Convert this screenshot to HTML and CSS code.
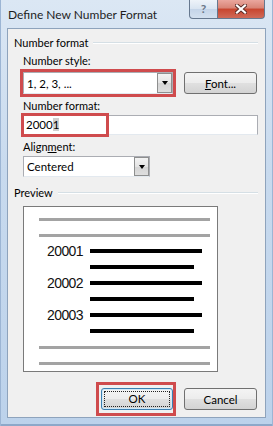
FILE: index.html
```html
<!DOCTYPE html>
<html lang="en">
<head>
    <meta charset="UTF-8">
    <meta name="viewport" content="width=device-width, initial-scale=1.0">
    <title>Define New Number Format</title>
    <link rel="stylesheet" href="styles.css">
</head>
<body>
    <div class="window">
        <!-- Title bar -->
        <div class="titlebar">
            <span class="title">Define New Number Format</span>
            <div class="caption">
                <div class="cap-help">?</div>
                <div class="cap-close">
                    <svg width="12" height="10" viewBox="0 0 12 10">
                        <path d="M2 1.5 L10 8.5 M10 1.5 L2 8.5" stroke="#5a2a26" stroke-width="4" stroke-linecap="square"/>
                        <path d="M2 1.5 L10 8.5 M10 1.5 L2 8.5" stroke="#fff" stroke-width="2.2" stroke-linecap="square"/>
                    </svg>
                </div>
            </div>
        </div>

        <div class="client">
            <!-- Number format group -->
            <div class="group-title"><span>Number format</span><div class="rule"></div></div>
            <div class="section">
                <label class="lbl">Number style:</label>
                <div class="row">
                    <div class="marked">
                        <div class="combo combo-style">
                            <span class="combo-text">1, 2, 3, ...</span>
                            <div class="drop"><span class="tri"></span></div>
                        </div>
                        <div class="mark mark-style"></div>
                    </div>
                    <button class="btn btn-font"><u>F</u>ont...</button>
                </div>

                <label class="lbl">Number format:</label>
                <div class="marked field-wrap">
                    <div class="textbox">2000<span class="sel">1</span></div>
                    <div class="mark mark-format"></div>
                </div>

                <label class="lbl">Align<u>m</u>ent:</label>
                <div class="combo combo-align">
                    <span class="combo-text">Centered</span>
                    <div class="drop"><span class="tri"></span></div>
                </div>
            </div>

            <!-- Preview group -->
            <div class="group-title preview-title"><span>Preview</span><div class="rule"></div></div>
            <div class="section">
                <div class="preview">
                    <div class="pv-row"><div class="grey-bar"></div></div>
                    <div class="pv-row"><div class="grey-bar"></div></div>
                    <div class="pv-row"><span class="num">20001</span><div class="bar long"></div></div>
                    <div class="pv-row"><span class="num"></span><div class="bar short"></div></div>
                    <div class="pv-row"><span class="num">20002</span><div class="bar long"></div></div>
                    <div class="pv-row"><span class="num"></span><div class="bar short"></div></div>
                    <div class="pv-row"><span class="num">20003</span><div class="bar long"></div></div>
                    <div class="pv-row"><span class="num"></span><div class="bar short"></div></div>
                    <div class="pv-row"><div class="grey-bar"></div></div>
                    <div class="pv-row"><div class="grey-bar"></div></div>
                </div>
            </div>

            <!-- Dialog buttons -->
            <div class="actions">
                <div class="marked">
                    <button class="btn btn-ok"><span class="focus">OK</span></button>
                    <div class="mark mark-ok"></div>
                </div>
                <button class="btn btn-cancel">Cancel</button>
            </div>
        </div>
    </div>
</body>
</html>
```

FILE: styles.css
```css
body {
    margin: 0;
    padding: 0;
    font-family: Lato, "Open Sans", sans-serif;
    font-size: 11px;
    color: #000;
    background-color: #c3d6ec;
}
.window {
    width: 273px;
    height: 426px;
    display: flex;
    flex-direction: column;
    background: linear-gradient(#dbe7f4, #c8daee 40%, #bcd2eb);
    box-shadow: inset 1px 0 0 #9cb5d4, inset -1px 0 0 #9cb5d4, inset 0 -2px 0 #8da8c9;
}
.titlebar {
    height: 28px;
    display: flex;
    align-items: flex-start;
    flex-shrink: 0;
}
.title {
    padding: 7px 0 0 8px;
    font-size: 12px;
    line-height: 15px;
    color: #1e1e1e;
}
.caption {
    margin-left: auto;
    margin-right: 8px;
    display: flex;
}
.cap-help {
    width: 27px;
    height: 18px;
    border: 1px solid #66788f;
    border-top: none;
    border-radius: 0 0 0 4px;
    background: linear-gradient(#eef3f9, #d9e4f1 50%, #c4d4e8 50%, #d3e0ef);
    color: #6b7788;
    font-size: 12px;
    font-weight: bold;
    line-height: 17px;
    text-align: center;
}
.cap-close {
    width: 46px;
    height: 18px;
    border: 1px solid #66788f;
    border-top: none;
    border-left: none;
    border-radius: 0 0 4px 0;
    background: linear-gradient(#eaa79e, #d88375 45%, #c8452f 50%, #d06a58);
    display: flex;
    align-items: center;
    justify-content: center;
}
.client {
    flex: 1;
    margin: 0 7px 8px 7px;
    padding: 7px 7px 0 6px;
    background-color: #f0f0f0;
    border: 1px solid #8ea3bc;
}
.group-title {
    display: flex;
    align-items: center;
    gap: 5px;
    line-height: 14px;
}
.group-title .rule {
    flex: 1;
    height: 0;
    border-top: 1px solid #d5dfe5;
    border-bottom: 1px solid #fff;
}
.preview-title {
    margin-top: 9px;
}
.section {
    padding-left: 9px;
}
.lbl {
    display: block;
    line-height: 14px;
    margin-top: 5px;
}
.lbl:first-child {
    margin-top: 4px;
}
.row {
    display: flex;
    align-items: center;
    gap: 11px;
    margin-top: 4px;
}
.marked {
    position: relative;
}
.mark {
    position: absolute;
    border: 3px solid #cf4b4d;
    pointer-events: none;
}
.mark-style {
    inset: -3px;
}
.mark-format {
    top: -2px;
    bottom: -2px;
    left: -2px;
    width: 82px;
}
.mark-ok {
    top: -6px;
    bottom: -6px;
    left: -5px;
    right: -3px;
}
.combo {
    display: flex;
    align-items: center;
    height: 21px;
    box-sizing: border-box;
    background: #fff;
    border: 1px solid #abadb3;
    border-bottom-color: #e3e9ef;
}
.combo-style {
    width: 150px;
    height: 22px;
}
.combo-align {
    width: 127px;
    margin-top: 2px;
}
.combo-text {
    flex: 1;
    padding-left: 3px;
    font-size: 11.5px;
}
.drop {
    width: 15px;
    height: 100%;
    box-sizing: border-box;
    border: 1px solid #8e8f8f;
    background: linear-gradient(#f3f3f3, #e4e4e4 50%, #d4d4d4 50%, #dedede);
    display: flex;
    align-items: center;
    justify-content: center;
}
.tri {
    width: 0;
    height: 0;
    border-left: 3.5px solid transparent;
    border-right: 3.5px solid transparent;
    border-top: 4px solid #000;
}
.field-wrap {
    margin-top: 2px;
    width: 235px;
}
.textbox {
    height: 20px;
    box-sizing: border-box;
    border: 1px solid #abadb3;
    border-bottom-color: #e3e9ef;
    background: #fff;
    padding-left: 2px;
    font-size: 11.5px;
    line-height: 18px;
}
.sel {
    background: #cfcfcf;
}
.btn {
    height: 21px;
    box-sizing: border-box;
    border: 1px solid #707070;
    border-radius: 3px;
    background: linear-gradient(#f4f4f4, #ececec 50%, #e0e0e0 50%, #d3d3d3);
    font-family: Lato, "Open Sans", sans-serif;
    font-size: 11.5px;
    color: #000;
    padding: 0;
}
.btn-font {
    width: 73px;
    height: 22px;
}
.preview {
    margin-top: 6px;
    width: 195px;
    height: 166px;
    box-sizing: border-box;
    border: 1px solid #7a7a7a;
    background: #fff;
    padding-top: 4px;
}
.pv-row {
    height: 16px;
    display: flex;
    align-items: center;
}
.grey-bar {
    flex: 1;
    height: 3px;
    margin: 0 7px 0 15px;
    background: #a3a3a3;
}
.num {
    width: 59px;
    text-align: right;
    font-family: "Liberation Sans", Arial, sans-serif;
    font-size: 14px;
    letter-spacing: -0.6px;
    color: #111;
}
.bar {
    margin-left: 7px;
    height: 4px;
    background: #000;
}
.bar.long {
    width: 112px;
}
.bar.short {
    width: 104px;
}
.actions {
    display: flex;
    justify-content: flex-end;
    gap: 11px;
    margin: 16px 1px 0 0;
}
.btn-ok {
    width: 72px;
    height: 22px;
    border-color: #3c7fb1;
    box-shadow: inset 0 0 0 1px #cfe9f9;
    display: flex;
    align-items: stretch;
    padding: 2px;
}
.btn-ok .focus {
    flex: 1;
    border: 1px dotted #222;
    line-height: 14px;
    text-align: center;
}
.btn-cancel {
    width: 73px;
    height: 22px;
}
```
